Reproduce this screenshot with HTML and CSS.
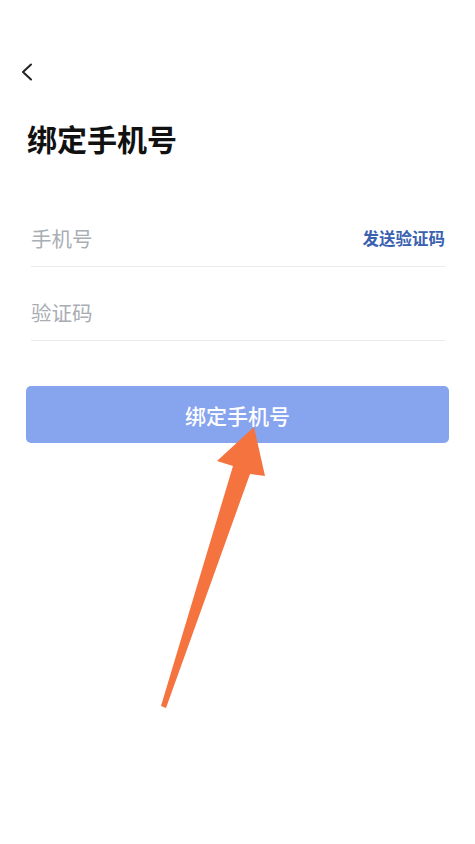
FILE: index.html
```html
<!DOCTYPE html>
<html lang="zh-CN">
<head>
<meta charset="utf-8">
<meta name="viewport" content="width=device-width, initial-scale=1">
<title>绑定手机号</title>
<link rel="stylesheet" href="styles.css">
</head>
<body>
<div class="page">
  <header class="nav">
    <button class="back" aria-label="返回">
      <svg width="14" height="18" viewBox="0 0 14 18"><path d="M11 1.5 L3 9 L11 16.5" fill="none" stroke="#222" stroke-width="2" stroke-linecap="round" stroke-linejoin="round"/></svg>
    </button>
  </header>
  <h1 class="title">绑定手机号</h1>
  <form class="form">
    <div class="row">
      <span class="placeholder">手机号</span>
      <span class="send">发送验证码</span>
    </div>
    <div class="row">
      <span class="placeholder">验证码</span>
    </div>
  </form>
  <div class="btn">绑定手机号</div>
  <svg class="arrow" width="475" height="844" viewBox="0 0 475 844">
    <polygon points="254,427 265,476 250,474 166,708 161,706 233,466 217,461" fill="#f5733f"/>
  </svg>
</div>
</body>
</html>
```
FILE: styles.css
```css
* { box-sizing: border-box; }
html, body { margin: 0; padding: 0; background: #fff; }
body {
  font-family: "Noto Sans CJK SC", "Noto Sans", sans-serif;
  color: #1a1a1a;
}
.page {
  position: relative;
  width: 475px;
  height: 844px;
  padding-top: 50px;
}
.nav {
  height: 44px;
  display: flex;
  align-items: center;
  padding-left: 20px;
}
.back {
  border: 0;
  background: none;
  padding: 0;
  width: 14px;
  height: 18px;
  display: flex;
}
.title {
  margin: 24px 0 0 27px;
  font-size: 30px;
  line-height: 40px;
  font-weight: 700;
  color: #111;
}
.form {
  margin: 35px 30px 0 31px;
}
.row {
  display: flex;
  align-items: center;
  justify-content: space-between;
  padding: 31px 0 14px;
  border-bottom: 1px solid #ebebeb;
}
.placeholder {
  font-size: 20.5px;
  line-height: 28px;
  color: #a9adb4;
}
.send {
  font-size: 16.5px;
  line-height: 28px;
  font-weight: 700;
  color: #3a60b0;
}
.btn {
  margin: 45px 26px 0 26px;
  height: 57px;
  border-radius: 5px;
  background: #87a4ef;
  color: #fff;
  font-size: 21px;
  font-weight: 500;
  display: flex;
  align-items: center;
  justify-content: center;
}
.arrow {
  position: absolute;
  left: 0;
  top: 0;
  pointer-events: none;
}
```
